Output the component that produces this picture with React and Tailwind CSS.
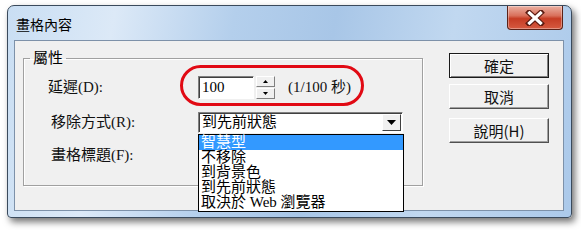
import React from "react"

const serif = "font-['Liberation_Serif','Noto_Sans_CJK_TC',serif]"

const Tri = ({ dir = "down", w = 5, h = 3 }) => (
    <svg width={w} height={h} viewBox={`0 0 ${w} ${h}`}>
        {dir === "down"
            ? <polygon points={`0,0 ${w},0 ${w / 2},${h}`} fill="#000" />
            : <polygon points={`0,${h} ${w},${h} ${w / 2},0`} fill="#000" />}
    </svg>
)

const DlgButton = ({ label, isDefault, className = "" }) => (
    <button
        className={
            "w-[100px] h-[25px] flex items-center justify-center bg-[#f0f0f0] text-[15px] leading-none text-[#111] font-['Noto_Sans_CJK_TC','Liberation_Serif',sans-serif] " +
            (isDefault
                ? "border border-[#1a1a1a] shadow-[inset_1px_1px_0_#fff,inset_-1px_-1px_0_#808080] "
                : "border border-t-white border-l-white border-r-[#505050] border-b-[#505050] shadow-[inset_-1px_-1px_0_#a0a0a0] ") +
            className
        }
    >
        {label}
    </button>
)

const items = ["智慧型", "不移除", "到背景色", "到先前狀態", "取決於 Web 瀏覽器"]

export default function App() {
    return (
        <div className="w-[581px] h-[230px] bg-white pt-[5px] pl-[7px] overflow-hidden">
            {/* window */}
            <div className="w-[565px] h-[213px] flex flex-col border border-[#3a4a5c] rounded-t-[7px] rounded-b-[4px] bg-[linear-gradient(100deg,#c9def3_0%,#dce9f7_18%,#b4cfec_38%,#a8c6e7_55%,#c1d8f0_75%,#abc9ea_100%)] shadow-[3px_4px_7px_rgba(0,0,0,0.55)]">
                {/* title bar */}
                <div className="h-[34px] flex justify-between shrink-0">
                    <span className="self-center pl-[8px] pt-[1px] text-[14px] leading-none text-black font-['Noto_Sans_CJK_TC',sans-serif]">畫格內容</span>
                    <div className="mr-[8px] w-[56px] h-[24px] rounded-b-[4px] border border-t-0 border-[#5b2218] bg-[linear-gradient(180deg,#eab0a2_0%,#d9705b_42%,#c63c24_55%,#d65a40_100%)] flex items-center justify-center shadow-[inset_0_0_0_1px_rgba(255,255,255,0.35)]">
                        <svg width="20" height="16" viewBox="0 0 20 16">
                            <path d="M4 2.5 L16 13.5 M16 2.5 L4 13.5" stroke="#5a1a10" strokeWidth="5.5" strokeLinecap="square" />
                            <path d="M4.5 3 L15.5 13 M15.5 3 L4.5 13" stroke="#fff" strokeWidth="3.2" strokeLinecap="square" />
                        </svg>
                    </div>
                </div>
                {/* client area */}
                <div className="ml-[6px] w-[550px] h-[171px] bg-[#f0f0f0] border border-[#7d91a9] flex items-start">
                    <fieldset className="ml-[8px] mt-[9px] w-[400px] h-[136px] border border-[#a0a0a0] shadow-[inset_1px_1px_0_#fff,1px_1px_0_#fff] pl-[24px] pt-[10px]">
                        <legend className={"-ml-[18px] px-[3px] text-[15px] leading-[16px] text-black " + serif}>屬性</legend>

                        <div className="relative flex items-center h-[23px]">
                            <span className={"w-[150px] text-[15px] leading-none text-[#111] " + serif}>延遲(D):</span>
                            <div className="w-[56px] h-[23px] bg-white border border-t-[#808080] border-l-[#808080] border-r-white border-b-white shadow-[inset_1px_1px_0_#404040] flex items-center pl-[3px]">
                                <span className={"text-[15px] leading-none text-black " + serif}>100</span>
                            </div>
                            <div className="ml-[2px] w-[19px] h-[23px] flex flex-col gap-[1px]">
                                <div className="h-[11px] flex items-center justify-center bg-[#f0f0f0] border border-t-white border-l-white border-r-[#808080] border-b-[#808080]">
                                    <Tri dir="up" w={5} h={3} />
                                </div>
                                <div className="h-[11px] flex items-center justify-center bg-[#f0f0f0] border border-t-white border-l-white border-r-[#808080] border-b-[#808080]">
                                    <Tri dir="down" w={5} h={3} />
                                </div>
                            </div>
                            <span className={"ml-[13px] text-[15px] leading-none text-[#111] " + serif}>(1/100 秒)</span>
                            {/* red annotation oval */}
                            <div className="absolute left-[132px] top-[-11px] w-[184px] h-[41px] rounded-full border-[3px] border-[#e10a14] pointer-events-none" />
                        </div>

                        <div className="flex items-center h-[21px] mt-[13px]">
                            <span className={"w-[150px] pl-[3px] text-[15px] leading-none text-[#111] " + serif}>移除方式(R):</span>
                            <div className="relative w-[205px] h-[21px] bg-white border border-t-[#808080] border-l-[#808080] border-r-white border-b-white shadow-[inset_1px_1px_0_#404040] flex items-center justify-between">
                                <span className={"pl-[3px] text-[15px] leading-none text-black " + serif}>到先前狀態</span>
                                <div className="mr-[1px] w-[19px] h-[17px] flex items-center justify-center bg-[#f0f0f0] border border-t-white border-l-white border-r-[#404040] border-b-[#404040]">
                                    <Tri dir="down" w={9} h={5} />
                                </div>
                                {/* open list */}
                                <ul className="absolute z-10 left-[-1px] top-[21px] w-[206px] h-[78px] bg-white border border-black">
                                    {items.map((it, i) => (
                                        <li
                                            key={it}
                                            className={
                                                "h-[15px] pl-[2px] flex items-center text-[15px] leading-none whitespace-nowrap " + serif + " " +
                                                (i === 0 ? "bg-[#3399ff] text-white" : "text-black")
                                            }
                                        >
                                            {it}
                                        </li>
                                    ))}
                                </ul>
                            </div>
                        </div>

                        <div className="flex items-center h-[21px] mt-[12px]">
                            <span className={"w-[150px] pl-[3px] text-[15px] leading-none text-[#111] " + serif}>畫格標題(F):</span>
                        </div>
                    </fieldset>

                    <div className="ml-[26px] mt-[12px] flex flex-col">
                        <DlgButton label="確定" isDefault />
                        <DlgButton label="取消" className="mt-[6px]" />
                        <DlgButton label="說明(H)" className="mt-[9px]" />
                    </div>
                </div>
            </div>
        </div>
    )
}
